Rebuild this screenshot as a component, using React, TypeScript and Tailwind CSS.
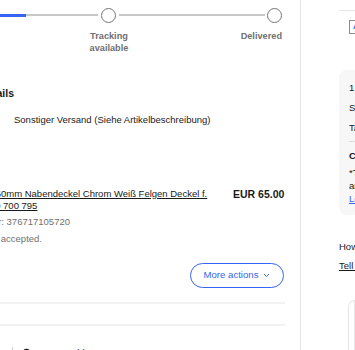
export default function App() {
  return (
    <div className="flex h-[350px] w-[355px] overflow-hidden bg-white font-['Liberation_Sans',Arial,sans-serif] text-[#191919]">
      {/* Left column */}
      <div className="w-[301px] shrink-0 overflow-hidden border-r border-[#e5e5e5]">
        {/* progress */}
        <div className="flex h-[30px] items-center">
          <div className="h-[3px] w-[26px] bg-[#3665f3]" />
          <div className="h-[2px] w-[72px] bg-[#c7c7c7]" />
          <div className="ml-[3px] h-[15px] w-[15px] rounded-full border-[1.5px] border-[#767676]" />
          <div className="ml-[3px] h-[2px] w-[146px] bg-[#c7c7c7]" />
          <div className="ml-[2px] h-[15px] w-[15px] rounded-full border-[1.5px] border-[#767676]" />
        </div>
        <div className="flex text-[9.2px] font-bold leading-[12px] text-[#707070]">
          <div className="ml-[79px] w-[60px] text-center">
            Tracking
            <br />
            available
          </div>
          <div className="ml-auto mr-[18px]">Delivered</div>
        </div>

        <div className="mt-[33px] flex w-[14px] justify-end overflow-hidden whitespace-nowrap text-[10.5px] font-bold leading-[13px]">
          Shipping details
        </div>
        <div className="mt-[12.5px] whitespace-nowrap pl-[14px] text-[9.5px] leading-[13px]">
          Sonstiger Versand (Siehe Artikelbeschreibung)
        </div>

        <div className="mt-[62px] flex items-start">
          <div className="w-[233px] shrink-0 overflow-hidden">
            <a className="-ml-[17px] block whitespace-nowrap text-[9.5px] leading-[12px] underline">
              4x 60mm Nabendeckel Chrom Weiß Felgen Deckel f.
              <br />
              6N0 700 795
            </a>
            <div className="mt-[1px] flex w-[70px] justify-end overflow-hidden whitespace-nowrap text-[9.5px] leading-[17px] text-[#707070]">
              Item number: 376717105720
            </div>
            <div className="flex w-[42px] justify-end overflow-hidden whitespace-nowrap text-[9.5px] leading-[17px] text-[#707070]">
              Returns accepted.
            </div>
          </div>
          <div className="whitespace-nowrap text-[10.5px] font-bold leading-[12px]">EUR 65.00</div>
        </div>

        <div className="mt-[16px] flex justify-end pr-[16px]">
          <button className="flex h-[25px] w-[94px] items-center justify-center gap-[5px] rounded-full border border-[#3665f3] text-[9.6px] text-[#3665f3]">
            More actions
            <svg width="7" height="5" viewBox="0 0 7 5" fill="none">
              <path d="M1 1l2.5 2.5L6 1" stroke="#3665f3" strokeWidth="1" />
            </svg>
          </button>
        </div>

        <div className="mr-[15px] mt-[14.5px] h-[2px] bg-[#f2f2f2]" />
        <div className="mr-[15px] mt-[20px] h-[2px] bg-[#f2f2f2]" />

        <div className="ml-[12px] mt-[21px] flex items-start gap-[8px] border-l border-[#cfcfcf] pl-[9px] text-[9.5px] leading-[12px]">
          <svg width="9" height="10" viewBox="0 0 9 10" fill="none" className="mt-[1px]">
            <path d="M1 9V5a3.5 3.5 0 017 0v4" stroke="#191919" strokeWidth="1.4" />
          </svg>
          <span className="ml-[16px]">Geschlossen</span>
        </div>
      </div>

      {/* Right column */}
      <div className="min-w-0 flex-1 overflow-hidden whitespace-nowrap pl-[38px] text-[9.5px]">
        <div className="mt-[10px] border-t border-[#e5e5e5]" />
        <div className="ml-[10px] mt-[9px] flex h-[14px] w-[14px] items-center justify-center border border-[#8a8a8a] text-[8px] font-bold text-[#3665f3]">
          A
        </div>
        <div className="mt-[36px] rounded-l-[8px] bg-[#f7f7f7] pb-[10px] pl-[10px] pt-[7.6px]">
          <div className="leading-[20px]">1 item</div>
          <div className="leading-[20px]">Shipping</div>
          <div className="leading-[20px]">Tax*</div>
          <div className="mt-[3.4px] border-t border-[#dcdcdc]" />
          <div className="mt-[3.6px] font-bold leading-[20px]">Charged total</div>
          <div className="leading-[13px]">*Tax is collected by eBay</div>
          <div className="leading-[13px]">and remitted to the authorities.</div>
          <div className="leading-[13px] text-[#3665f3] underline">Learn more</div>
        </div>
        <div className="mt-[22px] leading-[19px]">How was your experience?</div>
        <div className="leading-[19px] underline">Tell us what you think</div>
        <div className="ml-[9px] mt-[25px] h-[60px] rounded-tl-[8px] border border-[#e5e5e5]" />
      </div>
    </div>
  );
}
